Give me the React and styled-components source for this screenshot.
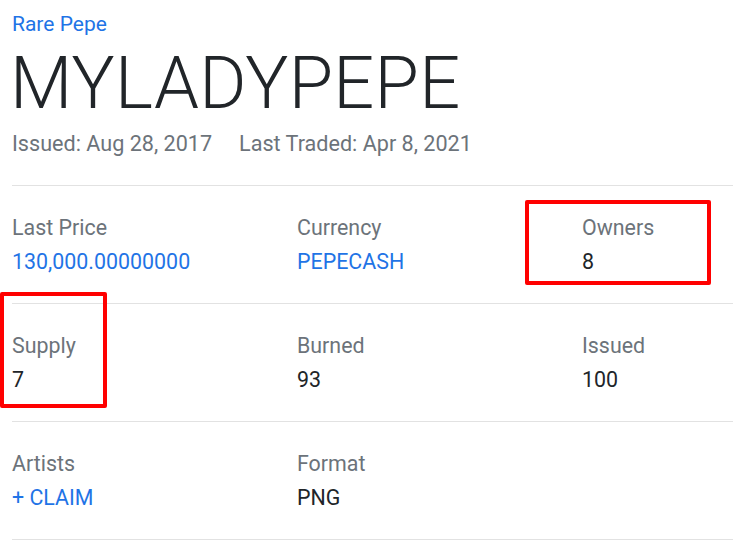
import React from "react";
import styled, { createGlobalStyle } from "styled-components";

const Global = createGlobalStyle`
  html, body { margin: 0; padding: 0; background: #fff; overflow: hidden; }
  body { font-family: Roboto, "Liberation Sans", sans-serif; }
`;

const Page = styled.div`
  position: relative;
  width: 733px;
  overflow: hidden;
  padding-left: 12px;
  box-sizing: border-box;
`;

const Header = styled.header`
  padding-top: 9px;
  padding-bottom: 25px;
  border-bottom: 1px solid #e2e2e2;
`;

const Collection = styled.a`
  display: block;
  font-size: 21px;
  line-height: 30px;
  color: #1f74e6;
  text-decoration: none;
`;

const Title = styled.h1`
  margin: 1px 0 0 -2px;
  font-size: 72px;
  font-weight: 300;
  line-height: 88px;
  color: #212529;
  letter-spacing: 0.3px;
`;

const Dates = styled.div`
  display: flex;
  gap: 27px;
  font-size: 21.6px;
  line-height: 32px;
  color: #6c737a;
`;

const Row = styled.div`
  display: grid;
  grid-template-columns: 285px 285px 285px;
  padding: 27px 0 26px;
  border-bottom: 1px solid #e2e2e2;
`;

const Cell = styled.div`
  display: flex;
  flex-direction: column;
  gap: 4px;
`;

const Label = styled.div`
  font-size: 21.4px;
  line-height: 30px;
  color: #6c737a;
`;

const Value = styled.div`
  font-size: 21.4px;
  line-height: 30px;
  color: ${(p) => (p.$link ? "#1f74e6" : "#212529")};
`;

const Highlight = styled.div`
  position: absolute;
  border: 4px solid #ff0000;
  border-radius: 2px;
  box-sizing: border-box;
`;

const rows = [
  [
    { label: "Last Price", value: "130,000.00000000", link: true },
    { label: "Currency", value: "PEPECASH", link: true },
    { label: "Owners", value: "8" },
  ],
  [
    { label: "Supply", value: "7" },
    { label: "Burned", value: "93" },
    { label: "Issued", value: "100" },
  ],
  [
    { label: "Artists", value: "+ CLAIM", link: true },
    { label: "Format", value: "PNG" },
  ],
];

export default function App() {
  return (
    <>
      <Global />
      <Page>
        <Header>
          <Collection>Rare Pepe</Collection>
          <Title>MYLADYPEPE</Title>
          <Dates>
            <span>Issued: Aug 28, 2017</span>
            <span>Last Traded: Apr 8, 2021</span>
          </Dates>
        </Header>
        {rows.map((r, i) => (
          <Row key={i}>
            {r.map((c) => (
              <Cell key={c.label}>
                <Label>{c.label}</Label>
                <Value $link={c.link}>{c.value}</Value>
              </Cell>
            ))}
          </Row>
        ))}
        <Highlight style={{ left: 525, top: 200, width: 186, height: 85 }} />
        <Highlight style={{ left: 0, top: 292, width: 107, height: 116 }} />
      </Page>
    </>
  );
}
